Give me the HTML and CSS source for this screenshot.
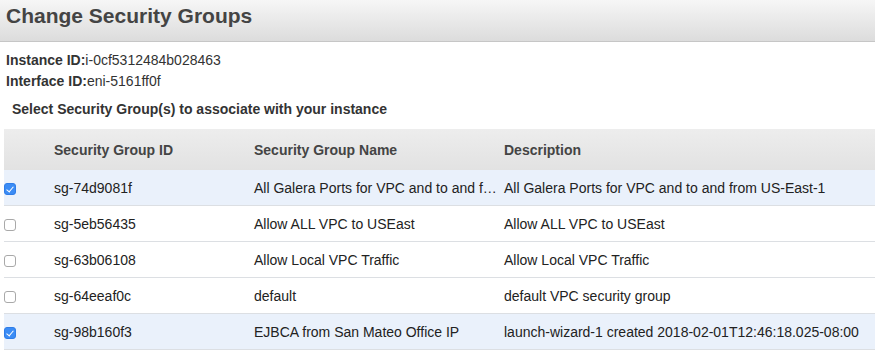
FILE: index.html
```html
<!DOCTYPE html>
<html lang="en">
<head>
    <meta charset="UTF-8">
    <title>Change Security Groups</title>
    <link rel="stylesheet" href="styles.css">
</head>
<body>
    <div class="dialog-header">
        <h2>Change Security Groups</h2>
    </div>
    <div class="dialog-body">
        <div class="info-line"><span class="info-label">Instance ID:</span>i-0cf5312484b028463</div>
        <div class="info-line"><span class="info-label">Interface ID:</span>eni-5161ff0f</div>
        <div class="select-title">Select Security Group(s) to associate with your instance</div>

        <table class="sg-table">
            <colgroup>
                <col class="col-check">
                <col class="col-id">
                <col class="col-name">
                <col>
            </colgroup>
            <thead>
                <tr>
                    <th></th>
                    <th>Security Group ID</th>
                    <th>Security Group Name</th>
                    <th>Description</th>
                </tr>
            </thead>
            <tbody>
                <tr class="selected">
                    <td><span class="check checked"></span></td>
                    <td>sg-74d9081f</td>
                    <td class="name-cell">All Galera Ports for VPC and to and from US-East-1</td>
                    <td>All Galera Ports for VPC and to and from US-East-1</td>
                </tr>
                <tr>
                    <td><span class="check"></span></td>
                    <td>sg-5eb56435</td>
                    <td class="name-cell">Allow ALL VPC to USEast</td>
                    <td>Allow ALL VPC to USEast</td>
                </tr>
                <tr>
                    <td><span class="check"></span></td>
                    <td>sg-63b06108</td>
                    <td class="name-cell">Allow Local VPC Traffic</td>
                    <td>Allow Local VPC Traffic</td>
                </tr>
                <tr>
                    <td><span class="check"></span></td>
                    <td>sg-64eeaf0c</td>
                    <td class="name-cell">default</td>
                    <td>default VPC security group</td>
                </tr>
                <tr class="selected">
                    <td><span class="check checked"></span></td>
                    <td>sg-98b160f3</td>
                    <td class="name-cell">EJBCA from San Mateo Office IP</td>
                    <td>launch-wizard-1 created 2018-02-01T12:46:18.025-08:00</td>
                </tr>
            </tbody>
        </table>
    </div>
</body>
</html>
```

FILE: styles.css
```css
body {
    margin: 0;
    font-family: "Liberation Sans", Arial, sans-serif;
    font-size: 14px;
    color: #222;
    background-color: #fff;
    overflow: hidden;
}
.dialog-header {
    height: 42px;
    background: linear-gradient(#f6f6f6, #dcdcdc);
    border-bottom: 1px solid #c6c6c6;
    box-sizing: border-box;
}
.dialog-header h2 {
    margin: 0;
    padding: 4px 0 0 6px;
    font-size: 21px;
    line-height: 24px;
    font-weight: bold;
    color: #444;
}
.dialog-body {
    padding: 8px 0 0 0;
}
.info-line {
    padding-left: 6px;
    line-height: 21px;
    color: #333;
}
.info-label {
    font-weight: bold;
    color: #333;
}
.select-title {
    padding: 7px 0 0 12px;
    line-height: 20px;
    font-weight: bold;
    color: #333;
}
.sg-table {
    margin: 10px 0 0 4px;
    width: 871px;
    border-collapse: collapse;
    table-layout: fixed;
}
.col-check { width: 46px; }
.col-id { width: 200px; }
.col-name { width: 250px; }
.sg-table th {
    height: 41px;
    padding: 0 0 0 4px;
    text-align: left;
    font-weight: bold;
    color: #444;
    background: linear-gradient(#ededed, #e2e2e2);
}
.sg-table td {
    height: 35px;
    padding: 0 0 0 4px;
    border-bottom: 1px solid #dcdfe3;
    white-space: nowrap;
    overflow: hidden;
    color: #222;
}
.sg-table td:first-child {
    padding: 0;
}
.sg-table .name-cell {
    text-overflow: ellipsis;
}
.sg-table tr.selected td {
    background-color: #eaf1fb;
}
.check {
    display: block;
    width: 10px;
    height: 10px;
    border: 1px solid #a9a9a9;
    border-radius: 3px;
    background-color: #fff;
    position: relative;
    top: 1px;
}
.check.checked {
    border-color: #2f7de8;
    background-color: #3b8cf5;
}
.check.checked::after {
    content: "";
    position: absolute;
    left: 3px;
    top: 1px;
    width: 3px;
    height: 6px;
    border: solid #fff;
    border-width: 0 1.5px 1.5px 0;
    transform: rotate(40deg);
}
```
